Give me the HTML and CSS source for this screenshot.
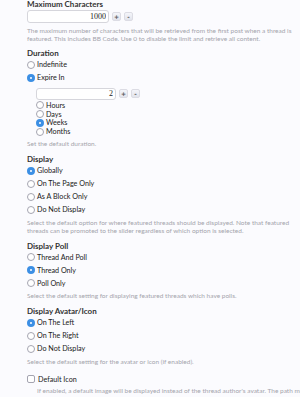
FILE: index.html
```html
<!DOCTYPE html>
<html lang="en">
<head>
    <meta charset="UTF-8">
    <title>Featured Thread Options</title>
    <link rel="stylesheet" href="styles.css">
</head>
<body>
    <div class="form">
        <div class="row first">
            <div class="row-label">Maximum Characters</div>
            <div class="spin">
                <input class="spin-input" type="text" value="1000">
                <button class="spin-btn">+</button>
                <button class="spin-btn">-</button>
            </div>
            <p class="hint">The maximum number of characters that will be retrieved from the first post when a thread is featured. This includes BB Code. Use 0 to disable the limit and retrieve all content.</p>
        </div>

        <div class="row">
            <div class="row-label">Duration</div>
            <div class="opt"><span class="radio"></span>Indefinite</div>
            <div class="opt"><span class="radio on"></span>Expire In</div>
            <div class="sub">
                <div class="spin">
                    <input class="spin-input short" type="text" value="2">
                    <button class="spin-btn">+</button>
                    <button class="spin-btn">-</button>
                </div>
                <div class="opt tight"><span class="radio"></span>Hours</div>
                <div class="opt tight"><span class="radio"></span>Days</div>
                <div class="opt tight"><span class="radio on"></span>Weeks</div>
                <div class="opt tight"><span class="radio"></span>Months</div>
            </div>
            <p class="hint">Set the default duration.</p>
        </div>

        <div class="row">
            <div class="row-label">Display</div>
            <div class="opt"><span class="radio on"></span>Globally</div>
            <div class="opt"><span class="radio"></span>On The Page Only</div>
            <div class="opt"><span class="radio"></span>As A Block Only</div>
            <div class="opt"><span class="radio"></span>Do Not Display</div>
            <p class="hint">Select the default option for where featured threads should be displayed. Note that featured threads can be promoted to the slider regardless of which option is selected.</p>
        </div>

        <div class="row">
            <div class="row-label">Display Poll</div>
            <div class="opt"><span class="radio"></span>Thread And Poll</div>
            <div class="opt"><span class="radio on"></span>Thread Only</div>
            <div class="opt"><span class="radio"></span>Poll Only</div>
            <p class="hint">Select the default setting for displaying featured threads which have polls.</p>
        </div>

        <div class="row">
            <div class="row-label">Display Avatar/Icon</div>
            <div class="opt"><span class="radio on"></span>On The Left</div>
            <div class="opt"><span class="radio"></span>On The Right</div>
            <div class="opt"><span class="radio"></span>Do Not Display</div>
            <p class="hint">Select the default setting for the avatar or icon (if enabled).</p>
        </div>

        <div class="row">
            <div class="opt"><span class="check"></span>Default Icon</div>
            <p class="hint indent">If enabled, a default image will be displayed instead of the thread author's avatar. The path must be set in Style Properties. Custom images can be uploaded for each featured thread when they are featured.</p>
        </div>
    </div>
</body>
</html>
```

FILE: styles.css
```css
html, body { overflow: hidden; }
body { margin: 0; background-color: #fbfbfe; font-family: Lato, sans-serif; color: #333; }
.form { width: 282px; margin-left: 27px; }
.row { margin-bottom: 7px; }
.row.first { margin-bottom: 6px; }
.row-label { font-size: 8px; font-weight: bold; color: #333; height: 9px; line-height: 9px; }
.spin { display: flex; align-items: center; gap: 3px; height: 13px; margin-top: 1px; }
.sub .spin { height: 12px; margin-top: 3.5px; margin-bottom: 1.6px; }
.spin-input { box-sizing: border-box; width: 82px; height: 100%; border: 1px solid #d6d6dc; border-radius: 3px; background: #fff; font: 8px "Liberation Serif", serif; text-align: right; padding: 0 2px; color: #222; }
.spin-input.short { width: 80px; }
.spin-btn { box-sizing: border-box; width: 9px; height: 9px; padding: 0; border: 1px solid #dcdce4; border-radius: 2px; background: linear-gradient(#f4f5fa, #e2e4ec); font: bold 6px "DejaVu Sans", sans-serif; color: #555; line-height: 7px; }
.hint { margin: 4px 0 0; font-size: 6.5px; line-height: 8px; color: #a4a4ac; }
.opt + .hint { margin-top: 2.5px; }
.sub + .hint { margin-top: 4.6px; }
.hint.indent { margin-top: 1px; padding-left: 10px; width: 300px; }
.opt { display: flex; align-items: center; gap: 2px; height: 13px; font-size: 7.2px; color: #1a1a1a; }
.opt.tight { height: 8.7px; }
.sub { padding-left: 9px; }
.radio { box-sizing: border-box; width: 8px; height: 8px; border-radius: 50%; border: 1px solid #a4a4b0; background: #fff; }
.radio.on { border: 3px solid #3c8fe4; background: #fff; }
.check { box-sizing: border-box; width: 8px; height: 8px; border-radius: 2px; border: 1px solid #a4a4b0; background: #fff; margin-right: 1px; }
```
